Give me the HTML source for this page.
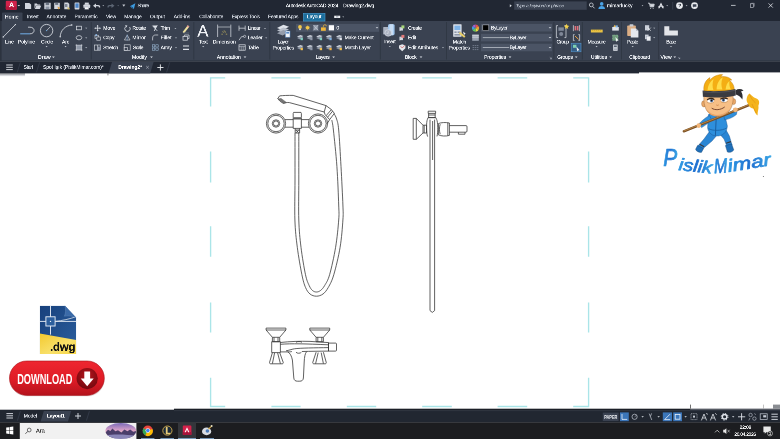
<!DOCTYPE html>
<html><head><meta charset="utf-8"><title>Autodesk AutoCAD 2024 - Drawing2.dwg</title>
<style>
html,body{margin:0;padding:0}
body{width:780px;height:439px;overflow:hidden;background:#fff;position:relative;font-family:"Liberation Sans",sans-serif}
.a{position:absolute}
.t{position:absolute;white-space:nowrap;line-height:1;color:#e6e9ee;-webkit-text-stroke:.55px currentColor;text-shadow:0 0 1.2px currentColor;transform-origin:0 50%}
#tx{position:absolute;left:0;top:0;width:3120px;height:1756px;transform:scale(.25);transform-origin:0 0;will-change:transform}
svg{position:absolute;left:0;top:0;overflow:visible;will-change:transform}
</style></head><body>
<svg width="780" height="439" viewBox="0 0 780 439">
<rect x="0" y="0" width="780" height="21" fill="#212733" />
<rect x="0" y="21" width="780" height="40" fill="#3a4251" />
<rect x="0" y="60.4" width="780" height="1.4" fill="#2e3542" />
<rect x="0" y="61.5" width="639" height="11.9" fill="#212733" />
<rect x="639" y="61.5" width="141" height="10.9" fill="#212733" />
<rect x="2" y="12.5" width="20.5" height="9" fill="#3a4251" rx=".8"/>
<rect x="514.2" y="1.4" width="72.5" height="8.4" fill="#3b4352" />
<rect x="303.3" y="13.3" width="21.7" height="7.8" fill="#1d6e9c" stroke="#4a9bd0" stroke-width=".6"/>
<rect x="0" y="409.7" width="780" height="13" fill="#212731" />
<rect x="174" y="408.7" width="516.6" height="1.6" fill="#1b1f27" />
<rect x="174" y="410.2" width="606" height="0.9" fill="#323844" />
<rect x="690.6" y="408.7" width="90" height="1" fill="#2b313c" />
<rect x="0" y="422.4" width="780" height="16.6" fill="#1c1d20" />
<rect x="19.8" y="423" width="116.6" height="16" fill="#f1f1f1" />
<rect x="178" y="422.4" width="18" height="16.6" fill="#34363b" />
<rect x="5.8" y="0.8" width="11" height="9" rx="1" fill="#d3224b"/>
<rect x="5.8" y="6.5" width="11" height="3.3" rx="1" fill="#b5173c"/>
<path d="M17.50 4.95h2.60l-1.30 1.30z" fill="#e8e8ee"/>
<path d="M25 3h4.3l1.8 1.6v4.4h-6.1z" fill="#d2d6de"/>
<path d="M34.5 3.6h2.4l.7.8h2.6v1h-4.4l-1.3 3.4z M36.2 5.8h5l-1.4 3.2h-5z" fill="#d2d6de"/>
<path d="M44.3 2.8h6.4v6.4h-6.4z" fill="#d2d6de"/><rect x="45.6" y="2.8" width="3.6" height="2.4" fill="#6a7382"/><rect x="45.6" y="6.5" width="3.8" height="2.7" fill="#8a93a2"/>
<path d="M54.2 2.8h5.6v6.2h-5.6z" fill="#d2d6de"/><rect x="55.2" y="2.8" width="3" height="2.1" fill="#6a7382"/><path d="M57.5 6.5l2.8 1.5-2 1.5z" fill="#e0a040"/>
<path d="M64.3 2.6h3.6l1.4 1.3v5.3h-5z" fill="#d2d6de"/><rect x="65" y="4" width="2.4" height="3" fill="#7d8796"/><path d="M67.6 6.6l2.6 2.6h-2.6z" fill="#d8c060"/>
<rect x="74.6" y="2.4" width="4.8" height="7" rx=".6" fill="#d2d6de"/><rect x="75.4" y="3.4" width="3.2" height="4.4" fill="#4a84c8"/>
<rect x="83.4" y="4.4" width="6.8" height="3.6" rx=".8" fill="#d2d6de"/><rect x="84.8" y="2.6" width="4" height="2.2" fill="#d2d6de"/><rect x="84.8" y="7" width="4" height="2.4" fill="#f4f5f8" stroke="#6a7382" stroke-width=".3"/>
<path d="M93 5.8l3-2.4v1.6h2.2c1.4 0 2 .8 2 2v.6h-1.3v-.5c0-.6-.3-.9-.9-.9h-2v1.9z" fill="#d2d6de"/>
<path d="M102.40 5.35h1.80l-0.90 0.90z" fill="#c8ccd4"/>
<path d="M114.5 5.8l-3-2.2v1.5h-2.2c-1.3 0-1.8.7-1.8 1.8v.5h1.2v-.4c0-.5.3-.8.8-.8h2v1.8z" fill="#5d6674"/>
<path d="M117.30 5.35h1.80l-0.90 0.90z" fill="#6a7382"/>
<path d="M122.3 4.6h3l-1.5 2.2z" fill="#c8ccd4"/>
<path d="M129.8 6.2l5.6-3-1.6 6-1.4-2.2z" fill="#3c9be0"/><path d="M130 6.3l2.4.9.3 1.9z" fill="#2a78b8"/>
<path d="M509.8 4.2l2 1.5-2 1.5z" fill="#d8dce2"/>
<circle cx="591.3" cy="4.9" r="1.9" fill="none" stroke="#cfd4dc" stroke-width=".8"/><path d="M592.7 6.4l1.8 1.9" stroke="#cfd4dc" stroke-width=".9"/>
<circle cx="601.7" cy="3.9" r="1.8" fill="#4aa3e6"/><path d="M598.4 9c0-2.2 1.4-3.1 3.3-3.1s3.3.9 3.3 3.1z" fill="#4aa3e6"/>
<path d="M641.60 5.25h1.80l-0.90 0.90z" fill="#c8ccd4"/>
<path d="M648.4 3.2h1.2l.6 3.6h3.4l.6-2.6h-4.2M650.6 8.3v.1M653.2 8.3v.1" fill="none" stroke="#d5d9e0" stroke-width=".9" stroke-linecap="round"/><path d="M650 4.2h4.2l-.6 2.6h-3.2z" fill="#d5d9e0"/>
<path d="M661 2.6l2.9 5.6h-1.5l-1.4-3-1.4 3h-1.5z" fill="#e3e6ec"/><path d="M658.2 6.6h5.6" stroke="#e3e6ec" stroke-width=".7"/>
<path d="M666.30 5.25h1.80l-0.90 0.90z" fill="#c8ccd4"/>
<path d="M672.7 2v7.6" stroke="#4a5262" stroke-width=".5"/>
<circle cx="679.5" cy="5.6" r="3.4" fill="#e8eaee"/>
<path d="M685.70 5.25h1.80l-0.90 0.90z" fill="#c8ccd4"/>
<circle cx="694.5" cy="5.6" r="3.4" fill="#e8eaee"/><path d="M692.8 4.3h3.6v2.4h-2l-1 .9v-.9h-.6z" fill="#3a4251"/>
<path d="M731 5.4h4.6" stroke="#d8dce2" stroke-width=".8"/>
<rect x="750.3" y="3.8" width="3.2" height="3.6" fill="none" stroke="#c8ccd4" stroke-width=".6"/><path d="M751.3 3.3h3v3.3" fill="none" stroke="#c8ccd4" stroke-width=".45"/>
<path d="M768.6 3.4l4.2 4.2M772.8 3.4l-4.2 4.2" stroke="#e3e6ec" stroke-width=".8"/>
<rect x="334.2" y="15.7" width="6" height="2.3" fill="#f0f2f5"/><rect x="336" y="16.4" width="2.4" height=".9" fill="#8a93a2"/>
<path d="M342.40 16.60h1.60l-0.80 0.80z" fill="#d8dce2"/>
<path d="M6.2 65h6.6M6.2 67.3h6.6M6.2 69.6h6.6" stroke="#e3e6ec" stroke-width=".9"/>
<path d="M17.2 72.4l3.2-10M36.4 72.4l3.2-10M166.6 72.4l3.2-10" stroke="#3a4150" stroke-width=".7"/>
<path d="M108.6 73.3l3.4-11.4h41.6l-3.4 11.4z" fill="#3a4251"/>
<path d="M146.2 66l2.6 2.6M148.8 66l-2.6 2.6" stroke="#b8bec8" stroke-width=".6"/>
<path d="M160.4 64.4v6.2M157.3 67.5h6.2" stroke="#eef0f4" stroke-width=".9"/>
<path d="M91.3 22v37.5" stroke="#2c333f" stroke-width=".7"/>
<path d="M193.8 22v37.5" stroke="#2c333f" stroke-width=".7"/>
<path d="M269.8 22v37.5" stroke="#2c333f" stroke-width=".7"/>
<path d="M380.4 22v37.5" stroke="#2c333f" stroke-width=".7"/>
<path d="M446.5 22v37.5" stroke="#2c333f" stroke-width=".7"/>
<path d="M553.9 22v37.5" stroke="#2c333f" stroke-width=".7"/>
<path d="M582.4 22v37.5" stroke="#2c333f" stroke-width=".7"/>
<path d="M621.5 22v37.5" stroke="#2c333f" stroke-width=".7"/>
<path d="M658.6 22v37.5" stroke="#2c333f" stroke-width=".7"/>
<rect x="0" y="21" width="1.6" height="40" fill="#2c333f"/>
<path d="M3.2 37l12.2-12.4" stroke="#dfe3ea" stroke-width=".8" fill="none"/><circle cx="3.2" cy="37" r=".7" fill="#dfe3ea"/><circle cx="15.4" cy="24.6" r=".7" fill="#dfe3ea"/>
<path d="M20.2 33.8h9.8" stroke="#6ea6dc" stroke-width="1.1" fill="none"/><path d="M30 33.8c5.4 0 5.4-6.6 0-6.6h-2" stroke="#dfe3ea" stroke-width=".8" fill="none"/>
<circle cx="46.6" cy="30.6" r="6.2" stroke="#dfe3ea" stroke-width=".8" fill="none"/><path d="M46.6 30.6l3.6-3.8" stroke="#dfe3ea" stroke-width=".7"/><circle cx="46.6" cy="30.6" r=".7" fill="#6ea6dc"/>
<path d="M45.55 46.08h2.10l-1.05 1.05z" fill="#c4cad4"/>
<path d="M60.2 36.6c.4-6.4 5-11 11.6-11.6" stroke="#dfe3ea" stroke-width=".8" fill="none"/><circle cx="60.2" cy="36.8" r=".7" fill="#dfe3ea"/><circle cx="71.8" cy="25" r=".7" fill="#dfe3ea"/>
<path d="M64.55 46.08h2.10l-1.05 1.05z" fill="#c4cad4"/>
<rect x="76.4" y="26.2" width="5.2" height="3.6" stroke="#dfe3ea" stroke-width=".7" fill="none"/>
<path d="M85.15 27.68h2.10l-1.05 1.05z" fill="#c4cad4"/>
<ellipse cx="79" cy="37.7" rx="2.8" ry="2.1" stroke="#dfe3ea" stroke-width=".7" fill="none"/>
<path d="M85.15 37.38h2.10l-1.05 1.05z" fill="#c4cad4"/>
<rect x="76.4" y="45.2" width="5.2" height="4.8" fill="#8f98a8"/><path d="M75.6 45.2h6.8M75.6 50h6.8M76.4 44.4v6.4M81.6 44.4v6.4" stroke="#dfe3ea" stroke-width=".6"/>
<path d="M85.15 47.27h2.10l-1.05 1.05z" fill="#c4cad4"/>
<path d="M52.05 56.62h2.70l-1.35 1.35z" fill="#dfe3ea"/>
<path d="M97.6 25.4v5.6M94.8 28.2h5.6" stroke="#dfe3ea" stroke-width=".8"/><path d="M96.6 26.2l1-1.2 1 1.2zM96.6 30.2l1 1.2 1-1.2zM95.6 27.2l-1.2 1 1.2 1zM99.6 27.2l1.2 1-1.2 1z" fill="#dfe3ea"/>
<rect x="95" y="35.2" width="3.4" height="3.4" stroke="#dfe3ea" stroke-width=".6" fill="none"/><rect x="96.8" y="37" width="3.6" height="3.2" stroke="#dfe3ea" stroke-width=".6" fill="#3a4251"/><circle cx="96.2" cy="35" r=".9" fill="#8ab6e4"/>
<rect x="94.4" y="45" width="6.2" height="5.2" stroke="#dfe3ea" stroke-width=".6" fill="none"/><path d="M97.5 45v5.2" stroke="#dfe3ea" stroke-width=".6"/><rect x="97.8" y="46.6" width="2" height="3.6" fill="#8f98a8"/>
<path d="M129.6 27a2.7 2.7 0 1 1-3.8-.4" stroke="#dfe3ea" stroke-width=".8" fill="none"/><path d="M125 25.2l2.4.2-1 2z" fill="#dfe3ea"/>
<path d="M124.4 40l2.8-4.8 2.8 4.8z" stroke="#dfe3ea" stroke-width=".6" fill="none"/><path d="M127.2 34.4v6.2" stroke="#8ab6e4" stroke-width=".5"/>
<rect x="124.2" y="44.8" width="6" height="5.6" stroke="#dfe3ea" stroke-width=".6" fill="none"/><rect x="124.2" y="47.4" width="3.2" height="3" stroke="#dfe3ea" stroke-width=".6" fill="#3a4251"/>
<path d="M152.6 25.8l4.6 5M157 25.6l-2.8 5.4" stroke="#dfe3ea" stroke-width=".9"/><path d="M152.4 25.6h5.4l-2.6 2.6z" fill="#dfe3ea"/>
<path d="M174.35 27.88h2.10l-1.05 1.05z" fill="#c4cad4"/>
<path d="M152.6 40.4v-2.4c0-2 1.2-3 3-3h2.6" stroke="#dfe3ea" stroke-width=".7" fill="none"/>
<path d="M174.95 37.38h2.10l-1.05 1.05z" fill="#c4cad4"/>
<rect x="152.4" y="44.8" width="2.4" height="2.2" stroke="#a9c8e6" stroke-width=".5" fill="none"/>
<rect x="152.4" y="48.0" width="2.4" height="2.2" stroke="#a9c8e6" stroke-width=".5" fill="none"/>
<rect x="155.8" y="44.8" width="2.4" height="2.2" stroke="#a9c8e6" stroke-width=".5" fill="none"/>
<rect x="155.8" y="48.0" width="2.4" height="2.2" stroke="#a9c8e6" stroke-width=".5" fill="none"/>
<path d="M174.95 47.27h2.10l-1.05 1.05z" fill="#c4cad4"/>
<path d="M183.2 31.2l4.6-6 1.6 1.2-4.6 6-2 .6z" fill="#efe2a0"/><path d="M187.2 25.8l1.6 1.2" stroke="#e08a90" stroke-width="1.2"/><path d="M183 33h6" stroke="#7f8898" stroke-width=".5"/>
<rect x="183" y="36.4" width="4.4" height="3.8" stroke="#dfe3ea" stroke-width=".7" fill="none"/><path d="M184.4 36.4v-1.4h4.6v3.6h-1.4" stroke="#dfe3ea" stroke-width=".7" fill="none"/>
<path d="M183 46h6M183 49.4h6" stroke="#dfe3ea" stroke-width="1.1"/>
<path d="M150.15 56.62h2.70l-1.35 1.35z" fill="#dfe3ea"/>
<path d="M202.15 46.08h2.10l-1.05 1.05z" fill="#c4cad4"/>
<path d="M217.6 24.6v12.4M230.8 24.6v12.4" stroke="#dfe3ea" stroke-width=".7"/><path d="M218 27h12.4" stroke="#dfe3ea" stroke-width=".6"/><path d="M222.4 31.6l1.2 1M226 31.6l-1.2 1M224.2 30.4v1.4M221.4 34.2h1.4M225.8 34.2h1.4" stroke="#e6d060" stroke-width=".6"/>
<path d="M239 25.6v5.2M245.2 25.6v5.2M239 28.2h6.2" stroke="#dfe3ea" stroke-width=".7"/>
<path d="M263.95 27.88h2.10l-1.05 1.05z" fill="#c4cad4"/>
<path d="M239 40.2l2.6-3.6h2" stroke="#dfe3ea" stroke-width=".7" fill="none"/><circle cx="244.6" cy="36.4" r="1.1" stroke="#dfe3ea" stroke-width=".6" fill="none"/>
<path d="M265.15 37.38h2.10l-1.05 1.05z" fill="#c4cad4"/>
<rect x="239" y="44.8" width="6.2" height="5.4" stroke="#dfe3ea" stroke-width=".7" fill="none"/><path d="M239 46.6h6.2M241.2 46.6v3.6M243.2 46.6v3.6" stroke="#dfe3ea" stroke-width=".5"/>
<path d="M243.65 56.62h2.70l-1.35 1.35z" fill="#dfe3ea"/>
<path d="M277 28l6.4-3.2 5.6 2-6.4 3.4z" fill="#dfe3ea"/><path d="M277 30.6l6.4-3.2 5.6 2-6.4 3.4z" fill="#b9bfca"/><path d="M277 33.2l6.4-3.2 5.6 2-6.4 3.4z" fill="#959dab"/><rect x="285.4" y="31" width="4.6" height="6.2" fill="#f2f4f7" stroke="#5a8ac4" stroke-width=".5"/><rect x="286.2" y="32" width="3" height="1.6" fill="#5a8ac4"/>
<rect x="295.9" y="23.9" width="83.2" height="7.9" fill="#4b5465"/>
<circle cx="300" cy="27" r="1.9" fill="#f2c84a"/><rect x="299.1" y="28.6" width="1.8" height="1.5" fill="#d8dce4"/>
<circle cx="307.6" cy="27.8" r="1.8" fill="#f2c84a"/><path d="M307.6 25.2v5.2M305 27.8h5.2M305.8 26l3.6 3.6M309.4 26l-3.6 3.6" stroke="#f2c84a" stroke-width=".4"/>
<rect x="313.4" y="25" width="4.8" height="5.4" fill="#8d96a6"/><path d="M313.4 25l4.8 5.4M318.2 25l-4.8 5.4" stroke="#dfe3ea" stroke-width=".5"/>
<rect x="321" y="27.4" width="4.8" height="3.4" fill="#f0b83c"/><path d="M323.4 27.4v-1.2a1.5 1.5 0 0 1 3 0" stroke="#f0b83c" stroke-width=".7" fill="none"/>
<rect x="328.8" y="25.2" width="5.2" height="5.2" fill="#fbfbfc"/>
<path d="M375.70 27.25h2.60l-1.30 1.30z" fill="#dfe3ea"/>
<path d="M297 36.6l3.4-1.7 3 1.1-3.4 1.9z" fill="#c9ced8"/><path d="M297 38.1l3.4-1.7 3 1.1-3.4 1.9z" fill="#8d96a5"/><rect x="300.6" y="37.9" width="2.3" height="2.3" fill="#7fd0c0"/>
<path d="M297 46.6l3.4-1.7 3 1.1-3.4 1.9z" fill="#c9ced8"/><path d="M297 48.1l3.4-1.7 3 1.1-3.4 1.9z" fill="#8d96a5"/><rect x="300.6" y="47.9" width="2.3" height="2.3" fill="#f0c050"/>
<path d="M306.6 36.6l3.4-1.7 3 1.1-3.4 1.9z" fill="#c9ced8"/><path d="M306.6 38.1l3.4-1.7 3 1.1-3.4 1.9z" fill="#8d96a5"/><rect x="310.20000000000005" y="37.9" width="2.3" height="2.3" fill="#8f98a8"/>
<path d="M306.6 46.6l3.4-1.7 3 1.1-3.4 1.9z" fill="#c9ced8"/><path d="M306.6 48.1l3.4-1.7 3 1.1-3.4 1.9z" fill="#8d96a5"/><rect x="310.20000000000005" y="47.9" width="2.3" height="2.3" fill="#8f98a8"/>
<path d="M316.2 36.6l3.4-1.7 3 1.1-3.4 1.9z" fill="#c9ced8"/><path d="M316.2 38.1l3.4-1.7 3 1.1-3.4 1.9z" fill="#8d96a5"/><rect x="319.8" y="37.9" width="2.3" height="2.3" fill="#7fd0c0"/>
<path d="M316.2 46.6l3.4-1.7 3 1.1-3.4 1.9z" fill="#c9ced8"/><path d="M316.2 48.1l3.4-1.7 3 1.1-3.4 1.9z" fill="#8d96a5"/><rect x="319.8" y="47.9" width="2.3" height="2.3" fill="#f0c050"/>
<path d="M325.8 36.6l3.4-1.7 3 1.1-3.4 1.9z" fill="#c9ced8"/><path d="M325.8 38.1l3.4-1.7 3 1.1-3.4 1.9z" fill="#8d96a5"/><rect x="329.40000000000003" y="37.9" width="2.3" height="2.3" fill="#7fb0e0"/>
<path d="M325.8 46.6l3.4-1.7 3 1.1-3.4 1.9z" fill="#c9ced8"/><path d="M325.8 48.1l3.4-1.7 3 1.1-3.4 1.9z" fill="#8d96a5"/><rect x="329.40000000000003" y="47.9" width="2.3" height="2.3" fill="#f0b040"/>
<path d="M336 36.6l3.4-1.7 3 1.1-3.4 1.9z" fill="#c9ced8"/><path d="M336 38.1l3.4-1.7 3 1.1-3.4 1.9z" fill="#8d96a5"/><rect x="339.6" y="37.9" width="2.3" height="2.3" fill="#dfe3ea"/>
<path d="M336 46.6l3.4-1.7 3 1.1-3.4 1.9z" fill="#c9ced8"/><path d="M336 48.1l3.4-1.7 3 1.1-3.4 1.9z" fill="#8d96a5"/><rect x="339.6" y="47.9" width="2.3" height="2.3" fill="#f0c050"/>
<path d="M332.25 56.62h2.70l-1.35 1.35z" fill="#dfe3ea"/>
<rect x="383.2" y="27" width="8.6" height="7.4" rx=".6" fill="#aab2c0"/><rect x="388" y="24.2" width="6.6" height="11" rx="1.4" fill="#9cc4ec"/><rect x="389.4" y="24.2" width="3.8" height="11" fill="#c6dcf4"/><circle cx="388.2" cy="33" r="3.3" fill="#aab2c0" stroke="#e8ebf0" stroke-width=".5"/><path d="M388.2 31v2.4h-1.6" stroke="#eef0f4" stroke-width=".5" fill="none"/>
<path d="M388.75 45.88h2.10l-1.05 1.05z" fill="#c4cad4"/>
<rect x="399.4" y="27.2" width="3.6" height="3.4" fill="#c9ced8"/><rect x="401.4" y="25.4" width="3" height="3" fill="#a6d47a"/><path d="M399.79999999999995 31.0l2.2-2.8" stroke="#eef0f4" stroke-width=".5"/>
<rect x="399.4" y="36.7" width="3.6" height="3.4" fill="#c9ced8"/><rect x="401.4" y="34.900000000000006" width="3" height="3" fill="#e07a7a"/><path d="M399.79999999999995 40.5l2.2-2.8" stroke="#eef0f4" stroke-width=".5"/>
<path d="M399 45.4l3.2-1.2 3.2 1.2v2.8l-3.2 3-3.2-3z" fill="#e4e7ec"/><path d="M400.6 46.2l1.6 1.8 2.6-2.8" stroke="#d05a5a" stroke-width=".7" fill="none"/>
<path d="M441.95 47.27h2.10l-1.05 1.05z" fill="#c4cad4"/>
<path d="M419.65 56.62h2.70l-1.35 1.35z" fill="#dfe3ea"/>
<rect x="453.2" y="24.2" width="8.4" height="12.6" rx=".6" fill="#dfe3ea"/><rect x="454.4" y="25.6" width="6" height="4.4" fill="#7fb4e8"/><rect x="454.4" y="31.4" width="2.2" height="1.6" fill="#8f98a8"/><rect x="457.6" y="31.4" width="2.8" height="1.6" fill="#8f98a8"/><rect x="454.4" y="34" width="6" height="1.6" fill="#8f98a8"/><path d="M459.4 32.6l5.4 4.4" stroke="#e8cf6a" stroke-width="2"/><path d="M463 31.6l2.6 2-1.6 1.4z" fill="#f0f2f5"/>
<path d="M475.5 28.1L475.50 24.50A3.6 3.6 0 0 1 478.62 26.30z" fill="#e8504a"/>
<path d="M475.5 28.1L478.62 26.30A3.6 3.6 0 0 1 478.62 29.90z" fill="#f0a030"/>
<path d="M475.5 28.1L478.62 29.90A3.6 3.6 0 0 1 475.50 31.70z" fill="#e8e040"/>
<path d="M475.5 28.1L475.50 31.70A3.6 3.6 0 0 1 472.38 29.90z" fill="#60c860"/>
<path d="M475.5 28.1L472.38 29.90A3.6 3.6 0 0 1 472.38 26.30z" fill="#40a0e0"/>
<path d="M475.5 28.1L472.38 26.30A3.6 3.6 0 0 1 475.50 24.50z" fill="#a060d0"/>
<rect x="472.2" y="34.4" width="6.6" height="6.4" fill="#9aa2b0"/><path d="M472.2 35.6h6.6M472.2 37.2h6.6" stroke="#dfe3ea" stroke-width=".7"/>
<path d="M472.6 45.6h5.8M472.6 47.6h5.8M472.6 49.6h5.8" stroke="#7f8898" stroke-width=".8" stroke-dasharray="1.6 .6"/>
<rect x="481" y="23.9" width="71.1" height="7.6" fill="#4b5465"/>
<path d="M548.70 27.15h2.60l-1.30 1.30z" fill="#dfe3ea"/>
<rect x="481" y="33.8" width="71.1" height="7.6" fill="#4b5465"/>
<path d="M548.70 37.05h2.60l-1.30 1.30z" fill="#dfe3ea"/>
<rect x="481" y="43.7" width="71.1" height="7.6" fill="#4b5465"/>
<path d="M548.70 46.95h2.60l-1.30 1.30z" fill="#dfe3ea"/>
<rect x="482.8" y="24.9" width="6" height="5.8" fill="#000" stroke="#c8ccd4" stroke-width=".5"/>
<path d="M482.8 37.6h26.4M482.8 47.5h26.4" stroke="#dfe3ea" stroke-width=".6"/>
<path d="M508.65 56.62h2.70l-1.35 1.35z" fill="#dfe3ea"/>
<path d="M549.8 57.4l1.6 1.4M551.4 57.6v1.2h-1.2" stroke="#c4cad4" stroke-width=".5" fill="none"/>
<path d="M558 25.6h-1.6v12h1.6M564.4 25.6h1.6v12h-1.6" stroke="#dfe3ea" stroke-width=".7" fill="none"/><rect x="558.4" y="27.4" width="5.4" height="3.4" fill="#7f8898"/><circle cx="561.2" cy="34" r="2" fill="#7f8898"/><path d="M566.6 23.8l.8 1.8 1.8.4-1.4 1.2.4 1.9-1.6-1-1.6 1 .4-1.9-1.4-1.2 1.8-.4z" fill="#f2d048"/>
<path d="M573.4 25.2v6M579.4 25.2v6" stroke="#dfe3ea" stroke-width=".7"/><rect x="574.6" y="26" width="1.6" height="4.4" fill="#e0707a"/><rect x="576.8" y="26" width="1.6" height="4.4" fill="#e0707a"/>
<path d="M574.6 34.6h-1.2v6h1.2M578.4 34.6h1.2v6h-1.2" stroke="#dfe3ea" stroke-width=".7" fill="none"/><path d="M575 36l3.6 3.4" stroke="#e8a040" stroke-width="1"/>
<rect x="571.2" y="43.2" width="9.8" height="8.6" fill="#345d86" stroke="#5c9fd8" stroke-width=".5"/><rect x="573" y="44.8" width="3.4" height="3" fill="#7fd0b0"/><path d="M576.4 46.4l3.2 3.8-1.6.2-.8 1.2z" fill="#eef0f4"/>
<path d="M574.85 56.62h2.70l-1.35 1.35z" fill="#dfe3ea"/>
<rect x="590.9" y="29.6" width="11.8" height="2.9" fill="#e9c244"/><path d="M592.4 29.6v1.2M594.4 29.6v1.2M596.4 29.6v1.2M598.4 29.6v1.2M600.4 29.6v1.2" stroke="#8a6a10" stroke-width=".3"/>
<path d="M595.55 46.08h2.10l-1.05 1.05z" fill="#c4cad4"/>
<rect x="612.2" y="27" width="6.6" height="3.6" fill="#dfe3ea"/><path d="M613.4 27l1.4-2.2 1.6 2.2z" fill="#f0c050"/><rect x="615.6" y="25.4" width="2.2" height="2" fill="#7fb4e8"/>
<rect x="612.6" y="35" width="5.4" height="5.4" fill="#6f9a7c" stroke="#9fd0a8" stroke-width=".5" stroke-dasharray="1 .6"/><path d="M615.4 37l3.2 3.6-1.6.2-.7 1.2z" fill="#f2f4f7"/>
<rect x="613.2" y="44.6" width="4.4" height="6.2" fill="#dfe3ea"/><rect x="614" y="45.4" width="2.8" height="1.6" fill="#566070"/><path d="M614 48h2.8M614 49.4h2.8" stroke="#566070" stroke-width=".6" stroke-dasharray=".7 .35"/>
<path d="M609.25 56.62h2.70l-1.35 1.35z" fill="#dfe3ea"/>
<rect x="627.2" y="25.4" width="8.6" height="10.6" rx=".8" fill="#dcae84"/><rect x="629.6" y="24.2" width="3.8" height="2.2" rx=".5" fill="#c8ccd4"/><path d="M630.8 28.4h5.2l2.4 2.4v6.8h-7.6z" fill="#e6e9ee"/><path d="M636 28.4v2.4h2.4z" fill="#aeb5c2"/>
<path d="M631.65 46.08h2.10l-1.05 1.05z" fill="#c4cad4"/>
<rect x="645" y="25.2" width="4.2" height="5.2" fill="#c9ced8"/><path d="M647.6 27.6l3.2 3.2M650.8 27.6l-3.2 3.2" stroke="#eef0f4" stroke-width=".7"/>
<path d="M653.15 27.68h2.10l-1.05 1.05z" fill="#c4cad4"/>
<rect x="645" y="34.6" width="3.6" height="4.6" fill="#c9ced8"/><rect x="646.8" y="36.2" width="3.8" height="4.6" fill="#eef0f4" stroke="#8f98a8" stroke-width=".3"/>
<path d="M653.15 37.27h2.10l-1.05 1.05z" fill="#c4cad4"/>
<path d="M664.3 26.2h5v4.4h8.6v5h-13.6z" fill="#e3e5e9"/>
<path d="M669.95 46.08h2.10l-1.05 1.05z" fill="#c4cad4"/>
<path d="M673.45 56.62h2.70l-1.35 1.35z" fill="#dfe3ea"/>
<path d="M678.4 57.4l1.4 1.2M679.8 57.6v1h-1" stroke="#c4cad4" stroke-width=".5" fill="none"/>
<rect x="0" y="73.2" width="25" height="1.2" fill="#6e7278"/><rect x="0" y="74.4" width="25" height="1" fill="#a4a7ac"/><rect x="0" y="75.4" width="25" height=".7" fill="#d6d8dc"/>
<rect x="107.6" y="73" width=".7" height="2.4" fill="#555"/>
<path d="M210.60 77.8H224.52M210.60 406.5H224.52M272.07 77.8H299.93M272.07 406.5H299.93M347.48 77.8H375.52M347.48 406.5H375.52M422.88 77.8H451.12M422.88 406.5H451.12M498.28 77.8H526.53M498.28 406.5H526.53M573.88 77.8H588.60M573.88 406.5H588.60M210.6 77.80V105.92M588.6 77.80V105.92M210.6 152.28V181.72M588.6 152.28V181.72M210.6 226.88V256.12M588.6 226.88V256.12M210.6 303.07V331.72M588.6 303.07V331.72M210.6 378.48V406.50M588.6 378.48V406.50" stroke="#aae5e8" stroke-width="1.35" fill="none" stroke-linecap="square"/>
<g fill="none" stroke="#333" stroke-width=".78" stroke-linejoin="round"><circle cx="276" cy="123.5" r="9.6"/><circle cx="276" cy="123.5" r="8.2"/><circle cx="276" cy="123.5" r="3.7"/><circle cx="276" cy="123.5" r="2.6"/><circle cx="318" cy="123.5" r="9.6"/><circle cx="318" cy="123.5" r="8.2"/><circle cx="318" cy="123.5" r="3.7"/><circle cx="318" cy="123.5" r="2.6"/><path d="M285 119.6h8.2M285 127.2h8.2M301.4 119.6h7.6M301.4 127.2h7.6"/><path d="M293.6 112.4h7.4l.4 1v4l-.6 .6h-7l-.6-.6v-4zM293.4 118h7.8M293.4 119h7.8M293.2 118v10.4h8.2v-10.4M295.2 128.4v4.6h4.4v-4.6M295.2 130h4.4M296.2 130.2l2.4 2.6M298.6 130.2l-2.4 2.6"/><path d="M295 133C295.00 140.83 295.02 165.50 295 180C294.98 194.50 294.52 208.78 294.9 220C295.28 231.22 296.13 238.18 297.3 247.3C298.47 256.42 300.53 268.02 301.9 274.7C303.27 281.38 304.15 284.18 305.5 287.4C306.85 290.62 308.18 292.53 310 294C311.82 295.47 314.23 296.20 316.4 296.2C318.57 296.20 321.02 295.47 323 294C324.98 292.53 326.50 290.62 328.3 287.4C330.10 284.18 331.83 281.38 333.8 274.7C335.77 268.02 338.58 256.42 340.1 247.3C341.62 238.18 342.43 227.05 342.9 220C343.37 212.95 343.22 213.93 342.9 205C342.58 196.07 341.70 178.90 341 166.4C340.30 153.90 339.43 137.90 338.7 130C337.97 122.10 337.38 121.75 336.6 119C335.82 116.25 334.43 114.42 334 113.5"/><path d="M298.8 133C298.80 140.83 298.80 165.50 298.8 180C298.80 194.50 298.43 208.78 298.8 220C299.17 231.22 299.88 238.18 301 247.3C302.12 256.42 304.13 268.32 305.5 274.7C306.87 281.08 308.03 282.97 309.2 285.6C310.37 288.23 311.30 289.43 312.5 290.5C313.70 291.57 315.07 292.00 316.4 292C317.73 292.00 319.13 291.57 320.5 290.5C321.87 289.43 323.08 288.23 324.6 285.6C326.12 282.97 327.77 281.08 329.6 274.7C331.43 268.32 334.08 256.42 335.6 247.3C337.12 238.18 338.18 227.05 338.7 220C339.22 212.95 339.00 213.93 338.7 205C338.40 196.07 337.78 178.90 336.9 166.4C336.02 153.90 334.25 137.73 333.4 130C332.55 122.27 332.07 121.67 331.8 120"/><path d="M277.8 98.6L279.6 95.9C283 95.5 288 95.3 293.2 95.4L326 105.6L324.2 112L289.4 102.6C287 102.2 285.4 102.8 283.6 103.4C281 102.4 279 100.6 277.8 98.4Z"/><path d="M278.4 99L283.6 103.2L286.4 102.4L281 98.4Z" fill="#777" stroke-width=".4"/><path d="M326 105.6L331.4 109.6L334.4 113.4L329.6 119.6L325 114.4L324.2 112M327.6 117.2L332.6 111.2M326.2 115.6L331.4 109.6"/><path d="M329.6 119.6C328.6 121.6 327.6 123 326.6 124"/><path d="M413.2 118.4h3.1v20.9h-3.1zM416.3 118.4L423 125.2V133L416.3 139.3M423 125.2h3.6v7.8H423M424.2 125.2v7.8"/><path d="M428.2 111.2h7.4v2.2h-7.4zM428.6 113.4v4.2h6.6v-4.2M428.6 115h6.6M428 117.6h7.8M427.4 119.4C426.2 122 426.2 133 427.6 136.6M436.6 119.4C438 122 438.2 132 437 136.4M428 117.6L427.4 119.4M435.8 117.6L436.6 119.4"/><path d="M430 119.6V310.6L432.3 312.4L434.6 310.6V119.6M432.6 121V160" /><path d="M438.4 123.6C441 122.4 446 122.2 449.4 123V135.4C446 136.4 441 136.2 438.4 134.8ZM440.2 124.2C439.2 127 439.2 131.4 440.2 134.2M447.8 122.8v12.8M449.4 125.6H466C466.8 125.6 467 126 467 126.8V131C467 131.8 466.6 132.2 466 132.2H449.4M458.4 132.2V134.2H465V132.2"/><path d="M266.1 328.1H285.9V330L279.7 337.3H272.4L266.1 330ZM266.1 330H285.9M272.4 337.3V341.7H279.7V337.3M274 337.3V341.7M278 337.3V341.7"/><path d="M309.8 328.1H329.7V330L323.4 337.3H316.1L309.8 330ZM309.8 330H329.7M316.1 337.3V341.7H323.4V337.3M317.8 337.3V341.7M321.8 337.3V341.7"/><path d="M271.7 341.7H280.4V352.6H271.7Z"/><path d="M272.4 352.6L269.5 362.6C269.4 363.4 270 363.8 270.8 363.8H282C283 363.8 283.4 363.2 283.3 362.6L279.7 352.6M274.6 352.8L272.4 363.6M277.6 352.8L280.4 363.6"/><path d="M316.1 352.2L312.7 362.6C312.6 363.4 313.2 363.8 314 363.8H325C326 363.8 326.4 363.2 326.3 362.6L323.4 352.2M318.2 352.6L315.6 363.6M321.2 352.6L323.4 363.6"/><path d="M280.4 342.5C290 341.4 300 341.1 310 341.4L328.5 342.6M280.4 351.9H288C290 351.9 291 351.7 292 351.5M302 351.5C310 351.3 320 351.2 328.5 351.1M280.4 344.3C292 343.4 305 343.8 328.5 344.8M296 342.3C297 341.3 301 341.3 302 342.3M286 350.8C289 350.4 291 349.4 294.4 348.8C300 348 315 347.8 328.5 347.6"/><path d="M328.5 343.1H335.6C336.2 343.1 336.5 343.5 336.5 344V350.2C336.5 350.8 336.2 351.1 335.6 351.1H328.5ZM328.5 342.4V351.2"/><path d="M287.7 351.8C290 353 291.6 356 292.4 360L293.8 378C294 380.2 295.4 381.2 297.4 381.2H299.8C301.8 381.2 303.2 380.2 303.4 378L304.2 362C304.4 357 305 353.6 306.6 351.6M296 352.2C297 353.6 300.4 353.6 301.4 352.2"/></g>
<rect x="690.2" y="404.6" width=".7" height="4" fill="#333"/><rect x="763.2" y="404.6" width=".6" height="4" fill="#999"/><rect x="773" y="404.6" width="7" height="4.2" fill="#8a8d92"/>
<path d="M6.4 413.6h6.6M6.4 415.8h6.6M6.4 418h6.6" stroke="#dfe3ea" stroke-width=".9"/>
<path d="M17.4 420.6l3-9.4M42 420.6l3-9.4M86.4 420.6l3-9.4" stroke="#3a4150" stroke-width=".7"/>
<path d="M40.6 421.6l3.2-10.6h27.4l-3.2 10.6z" fill="#3a4251"/>
<path d="M78 413v6M75 416h6" stroke="#dfe3ea" stroke-width=".9"/>
<rect x="602.8" y="412.6" width="15.8" height="8.4" fill="#3a4251"/>
<text x="604.3" y="418.7" font-family="Liberation Sans, sans-serif" font-size="5.3" fill="#f2f4f7" font-weight="bold" textLength="13.00" lengthAdjust="spacingAndGlyphs">PAPER</text>
<rect x="620" y="412.4" width="8.8" height="8.8" fill="#3b76ba"/><path d="M622 414v5.4h5.2" stroke="#eaf2fc" stroke-width=".8" fill="none"/>
<circle cx="634.6" cy="416.8" r="2.6" stroke="#c4cad4" stroke-width=".7" fill="none"/><path d="M634.6 416.8l2-1.6" stroke="#c4cad4" stroke-width=".6"/>
<path d="M641.35 416.27h2.50l-1.25 1.25z" fill="#dfe3ea"/>
<path d="M649.2 413.6l2.6 6.4M651.6 413.4l-1.2 3" stroke="#c4cad4" stroke-width=".7"/>
<path d="M657.35 416.27h2.50l-1.25 1.25z" fill="#dfe3ea"/>
<rect x="662.8" y="412.4" width="9.2" height="8.8" fill="#3b76ba"/><path d="M664.6 419.6l5.4-5.4M664.6 419.6h5.6" stroke="#eaf2fc" stroke-width=".8"/>
<rect x="673.2" y="412.4" width="8.8" height="8.8" fill="#3b76ba"/><rect x="675.2" y="414.4" width="4.8" height="4.8" stroke="#eaf2fc" stroke-width=".8" fill="none"/>
<path d="M684.35 416.27h2.50l-1.25 1.25z" fill="#dfe3ea"/>
<rect x="691" y="413.6" width="6" height="6" stroke="#c4cad4" stroke-width=".6" stroke-dasharray="1.4 .8" fill="none"/><rect x="693" y="415.6" width="2" height="2" fill="#c4cad4"/>
<path d="M701.4 420.4l2.6-6.4 2.6 6.4M702.4 418h3.2" stroke="#dfe3ea" stroke-width=".8" fill="none"/><path d="M706 413.4l2 1" stroke="#dfe3ea" stroke-width=".7"/>
<path d="M710.4 420.4l2.6-6.4 2.6 6.4M711.4 418h3.2" stroke="#dfe3ea" stroke-width=".8" fill="none"/><path d="M715 413.2l1.8 1.6" stroke="#dfe3ea" stroke-width=".7"/>
<circle cx="724.6" cy="416.8" r="2.3" stroke="#dfe3ea" stroke-width="1.5" fill="none"/><circle cx="724.6" cy="416.8" r="3.4" stroke="#dfe3ea" stroke-width="1" stroke-dasharray="1.2 1.47" fill="none"/>
<path d="M731.95 416.27h2.50l-1.25 1.25z" fill="#dfe3ea"/>
<path d="M741.6 413.2v7.2M738 416.8h7.2" stroke="#dfe3ea" stroke-width=".9"/>
<circle cx="750.6" cy="415" r="1.7" stroke="#c4cad4" stroke-width=".6" fill="none"/><circle cx="754.4" cy="418.6" r="1.7" stroke="#c4cad4" stroke-width=".6" fill="none"/><path d="M750 418l-1.2 2.4M754.6 413.4l1 1.4" stroke="#c4cad4" stroke-width=".6"/>
<rect x="760.2" y="413.8" width="7" height="5.6" stroke="#c4cad4" stroke-width=".7" fill="none"/><rect x="763.2" y="415.2" width="3" height="2.2" fill="#c4cad4"/>
<path d="M771.4 414.2h6.4M771.4 416.8h6.4M771.4 419.4h6.4" stroke="#dfe3ea" stroke-width=".9"/>
<path d="M6.2 427.6l3-.45v3.1h-3zM9.7 427.1l3.6-.55v3.7h-3.6zM6.2 430.8h3v3.1l-3-.45zM9.7 430.8h3.6v3.7l-3.6-.55z" fill="#ffffff"/>
<circle cx="29.2" cy="430" r="1.9" stroke="#3a3a3a" stroke-width=".7" fill="none"/><path d="M27.8 431.4l-2.4 2.4" stroke="#3a3a3a" stroke-width=".8"/>
<defs><linearGradient id="sky" x1="0" y1="0" x2="0" y2="1"><stop offset="0" stop-color="#7a6ab8"/><stop offset=".45" stop-color="#d8a0c8"/><stop offset=".7" stop-color="#f0c8b8"/><stop offset="1" stop-color="#b8b0d0"/></linearGradient><clipPath id="thc"><ellipse cx="120.8" cy="431" rx="15.4" ry="8"/></clipPath></defs>
<g clip-path="url(#thc)"><rect x="105" y="423" width="32" height="16" fill="url(#sky)"/><path d="M105 433l3-3.2 2.4 1.2 2-2.4 3 2.6 2.6-1 3.4 2.2 3-2.8 3 1.6 2.8-1.8 3 2.4 3-.8v7h-31z" fill="#4a3e6a"/><path d="M105 435.6c8-1.6 20-1.4 32 .4v4h-32z" fill="#8a86b8"/></g>
<circle cx="147.8" cy="430.6" r="5" fill="#e8453c"/><path d="M147.8 430.6l-4.4-2.4a5 5 0 0 0 2 7.2z" fill="#34a853"/><path d="M147.8 430.6l-2.4 4.8a5 5 0 0 0 7-6.4z" fill="#fbbc05"/><circle cx="147.8" cy="430.6" r="2.3" fill="#fff"/><circle cx="147.8" cy="430.6" r="1.8" fill="#4285f4"/>
<circle cx="167.4" cy="430.6" r="4.6" fill="#1a2a3a" stroke="#c8a44a" stroke-width="1"/><path d="M165.8 427v7.2h4.2l.8-1.4h-3.2v-5.8z" fill="#e8cc7a"/>
<rect x="182.8" y="425.6" width="8.6" height="9.4" rx=".8" fill="#d3224b"/><rect x="182.8" y="432" width="8.6" height="3" fill="#a8143a"/><path d="M187 427.2l2.4 5h-1.2l-1.2-2.8-1.2 2.8h-1.2z" fill="#fff"/>
<ellipse cx="206.6" cy="431.4" rx="4.6" ry="3.8" fill="#d8dce2"/><circle cx="207.4" cy="431" r="1.8" fill="#4a7ab8"/><path d="M208 428.6l3.4-2.8.6.8-3 2.8z" fill="#c8a040"/><circle cx="211.6" cy="426" r="1" fill="#e8e0c0"/>
<rect x="141" y="438.2" width="13.400000000000006" height=".8" fill="#8ab4dc"/>
<rect x="160.4" y="438.2" width="13.599999999999994" height=".8" fill="#8ab4dc"/>
<rect x="178" y="438.2" width="18" height=".8" fill="#8ab4dc"/>
<rect x="200" y="438.2" width="14" height=".8" fill="#8ab4dc"/>
<path d="M715 432.4l2.2-2.2 2.2 2.2" stroke="#e6e6e6" stroke-width=".7" fill="none"/>
<path d="M723.2 429.8h1.4l1.8-1.6v5.8l-1.8-1.6h-1.4z" fill="#e6e6e6"/><path d="M727.6 429.8l2 2.6M729.6 429.8l-2 2.6" stroke="#e6e6e6" stroke-width=".5"/>
<path d="M763.4 426.6h7.4v5.6h-4.6l-1.4 1.6v-1.6h-1.4z" fill="#e8e8e8"/><circle cx="770" cy="433.4" r="2.5" fill="#1a1b1d" stroke="#e8e8e8" stroke-width=".6"/>
<defs>
<linearGradient id="dwb" x1="0" y1="0" x2="1" y2="1"><stop offset="0" stop-color="#17407c"/><stop offset="1" stop-color="#2c5f9e"/></linearGradient>
<linearGradient id="dwy" x1="0" y1="0" x2="1" y2="1"><stop offset="0" stop-color="#f3c92e"/><stop offset=".6" stop-color="#f8e06a"/><stop offset="1" stop-color="#f6d648"/></linearGradient>
<clipPath id="dwc"><path d="M39.8 305.7H64.9L76.2 317.8V354H39.8Z"/></clipPath>
<linearGradient id="dlr" x1="0" y1="0" x2="0" y2="1"><stop offset="0" stop-color="#ee2630"/><stop offset=".55" stop-color="#df1c26"/><stop offset="1" stop-color="#b4121c"/></linearGradient>
<radialGradient id="dlc" cx=".5" cy=".35" r=".7"><stop offset="0" stop-color="#b8141c"/><stop offset="1" stop-color="#6e080e"/></radialGradient>
</defs>
<g clip-path="url(#dwc)"><rect x="39.8" y="305.7" width="36.4" height="48.3" fill="url(#dwb)"/><path d="M39.8 333.4L76.2 340V354H39.8Z" fill="url(#dwy)"/><path d="M50.5 305.7V334.6M39.8 321.4H76.2" stroke="#eef2f8" stroke-width=".9" fill="none"/><path d="M55.3 321.4C62 320.6 70 319 76.2 316.6" stroke="#eef2f8" stroke-width=".7" fill="none"/><rect x="45.9" y="316.8" width="9.2" height="9.2" fill="#2c5f9e" stroke="#eef2f8" stroke-width=".9"/><circle cx="50.5" cy="321.4" r=".7" fill="#eef2f8"/></g>
<path d="M64.9 305.7C66 309.5 65.8 313 64.4 316.2C68 315.4 72.4 315.8 76.2 317.8Z" fill="#3a6aa8"/><path d="M64.9 305.7C66 309.5 65.8 313 64.4 316.2C68 315.4 72.4 315.8 76.2 317.8" fill="none" stroke="#6f94c4" stroke-width=".4"/>
<rect x="10.4" y="363" width="94" height="33.6" rx="16.8" fill="#d8d8d8" opacity=".55"/>
<rect x="9.5" y="361" width="94.8" height="34.4" rx="17.2" fill="url(#dlr)" stroke="#a8121a" stroke-width=".6"/>
<circle cx="87.2" cy="378.6" r="10.6" fill="url(#dlc)"/>
<path d="M84.3 371.4h5.8v7h3.6l-6.5 7.8-6.5-7.8h3.6z" fill="#ffffff"/>
<text x="17.2" y="384.1" font-family="Liberation Sans, sans-serif" font-weight="bold" font-size="14.4" fill="#ffffff" textLength="55.2" lengthAdjust="spacingAndGlyphs">DOWNLOAD</text>
<g><path d="M712 128L704 139L697.4 146.6L701.4 150L712 141L718 134Z" fill="#2a86d4" stroke="#174e8c" stroke-width=".4"/><path d="M717 131L724 139L727 146.6L732 145L729.4 136L724.4 127Z" fill="#2a86d4" stroke="#174e8c" stroke-width=".4"/><path d="M697.6 145.4L703.6 148.6L701.4 152.4C698.4 152.6 696 151 695.6 149.2Z" fill="#1f6fb8" stroke="#123e70" stroke-width=".4"/><path d="M725.4 145.6L731.6 143.8L733.8 150C732 152.4 729.4 152.8 727.4 152Z" fill="#1f6fb8" stroke="#123e70" stroke-width=".4"/><path d="M699.6 144.2l4.6 2.6M726 143.2l5-1.6" stroke="#3a3a40" stroke-width="1.2"/><path d="M708.4 114.6C712 112.4 720 112.2 724.6 114.4L727.4 126C727 131 724 135.4 718.4 136C712 136.2 708.6 133 707.6 128Z" fill="#2e8fdc" stroke="#174e8c" stroke-width=".4"/><path d="M716.4 113.4L715.4 135.6" stroke="#1b5fa0" stroke-width="1"/><path d="M708.6 128.6C712 131 722 131 726.6 128" stroke="#1b5fa0" stroke-width=".8" fill="none"/><path d="M709.4 115.4C705 118 701 121.4 698.4 124.4L701.6 127.6C705 125.6 709 122.6 711.6 119.6Z" fill="#2e8fdc" stroke="#174e8c" stroke-width=".4"/><path d="M723.6 114.6C727 114.2 730.4 113.6 732.4 112.4L734 108.4L737.4 109.4L736.4 114.6C733 117.4 728.6 119.4 724.6 119.8Z" fill="#2e8fdc" stroke="#174e8c" stroke-width=".4"/><path d="M683.8 131.4L750.2 104.6" stroke="#7a4e22" stroke-width="2.3" stroke-linecap="round"/><path d="M684 131L750 104.3" stroke="#b98848" stroke-width=".9" stroke-linecap="round"/><circle cx="698.8" cy="125.6" r="2.3" fill="#f2b578"/><circle cx="735.4" cy="109.8" r="2.4" fill="#f2b578"/><path d="M746.6 99C747 96 748.4 94.2 749.6 93.6C751 95 753 97.4 756.4 98.6C759.4 99.8 759.8 103 758.4 105.6C759 109 757.4 111.4 757.6 115.4C755.4 114 754.4 111 753.4 108.4C751.4 108.4 749.4 106.8 748.4 104.4C747.4 103 746.4 101 746.6 99Z" fill="#f4b41c"/><path d="M749.6 94.4C751 98 753 101 755.6 103M752 104C753 107 754.6 110 756.4 113" stroke="#e08f10" stroke-width=".6" fill="none"/><ellipse cx="703.8" cy="103.8" rx="2.2" ry="3.1" fill="#eaa868" stroke="#8a5a2a" stroke-width=".35"/><ellipse cx="733.6" cy="101.6" rx="2.1" ry="3" fill="#eaa868" stroke="#8a5a2a" stroke-width=".35"/><path d="M704 94C703.2 103 705 110.6 710 114C714.4 116.6 722 116.4 726.8 113.2C731.8 109.6 733.8 103 733 93Z" fill="#f6bf86" stroke="#8a5a2a" stroke-width=".4"/><path d="M706 108C708 112 712 114.6 717 115C722 115 727 112.6 730 108.6C728 114 722 116.6 717 116.4C712 116.4 707.6 113.6 706 108Z" fill="#e8a468"/><ellipse cx="710.6" cy="100.4" rx="3.4" ry="2.4" fill="#fff"/><ellipse cx="724.2" cy="99.8" rx="3.4" ry="2.4" fill="#fff"/><circle cx="711.6" cy="100.6" r="1.7" fill="#5a7aa8"/><circle cx="723.4" cy="100" r="1.7" fill="#5a7aa8"/><circle cx="711.6" cy="100.6" r=".8" fill="#111"/><circle cx="723.4" cy="100" r=".8" fill="#111"/><path d="M706.8 99.4C708.6 97.4 712.6 97.2 714.6 99.2L714.2 100.2C712 98.8 709.4 98.9 707.2 100.4ZM720 98.8C722 96.8 726 96.6 728 98.4L727.6 99.6C725.4 98.2 722.6 98.4 720.6 99.8Z" fill="#3a2414"/><path d="M706.8 102C708.6 103.4 712 103.4 714 102M720.6 101.6C722.4 103 726 102.8 727.8 101.2" stroke="#9a6a3a" stroke-width=".4" fill="none"/><path d="M712 108.4C715 110.4 720.4 110.2 724.4 107.2" stroke="#5a2a1a" stroke-width=".8" fill="none" stroke-linecap="round"/><path d="M716.2 104.8c.8.8 1.8.8 2.6 0" stroke="#b87038" stroke-width=".6" fill="none"/><path d="M704 91.6C703 85 705.6 80 710 77.6L709.6 80.6C712.6 76.6 717.6 74.4 722.6 74.6L720.8 76.8C725.4 76 729.4 77.2 731.8 80L729.4 80.2C732.8 82.8 734.8 87 734.2 91Z" fill="#f4ae14" stroke="#b87410" stroke-width=".4"/><path d="M707.6 90C708 85 710.4 81 713.6 79.2C712.2 83 712.4 87 713.4 90ZM716.6 89.6C716.6 84 719 79.4 722.8 77.2C720.8 82 721.2 86 722.4 89.6ZM725.6 89.4C726 85.6 727.2 82.6 729.4 81C729 84 729.6 87 730.8 89.2Z" fill="#ffdc4a"/><path d="M702.6 90.6C712 91.8 726 91.2 735.4 89L735.8 95.4C726 97.8 712 98.2 702.9 96.8Z" fill="#3b3b40"/><path d="M702.8 91.8C712 93 726 92.4 735.4 90.2" stroke="#5e5e66" stroke-width=".6" fill="none"/><path d="M735.4 90.4C738 88.6 741 88.6 743.6 90.4L741 91.4C742.4 93 743 96 742.4 99.4C740.6 97 738.4 95.4 735.8 94.6Z" fill="#2e2e33"/></g>
<defs><linearGradient id="pmg" x1="0" y1="0" x2="1" y2="0"><stop offset="0" stop-color="#2f9be4"/><stop offset=".5" stop-color="#1f6fd0"/><stop offset="1" stop-color="#3aa8e6"/></linearGradient></defs>
<g font-family="Liberation Sans, sans-serif" font-style="italic" fill="url(#pmg)" stroke="url(#pmg)" stroke-width=".7" stroke-linejoin="round"><text x="663.2" y="166.4" font-size="23.5" textLength="14" lengthAdjust="spacingAndGlyphs">P</text><text transform="translate(678.2 170) rotate(6)" font-size="17" textLength="33.6" lengthAdjust="spacingAndGlyphs">islik</text><text transform="translate(714.2 173.2) rotate(-3)" font-size="20.5" textLength="13.4" lengthAdjust="spacingAndGlyphs">M</text><text transform="translate(728.6 172) rotate(-9)" font-size="17.5" textLength="43.6" lengthAdjust="spacingAndGlyphs">imar</text></g>
<circle cx="763.4" cy="176.4" r=".5" fill="#555"/>
</svg>
<div id="tx">
<div class="t" style="left:36.0px;top:6.0px;font-size:28.0px;color:#ffffff;font-weight:bold;-webkit-text-stroke:.2px currentColor;">A</div>
<div class="t" style="left:550.0px;top:13.2px;font-size:19.6px;letter-spacing:-1.50px;color:#cdd3dc;">Share</div>
<div class="t" style="left:1143.2px;top:13.2px;font-size:19.6px;letter-spacing:-0.33px;color:#e9ecf0;">Autodesk AutoCAD 2024</div>
<div class="t" style="left:1372.8px;top:13.2px;font-size:19.6px;color:#e9ecf0;">Drawing2.dwg</div>
<div class="t" style="left:2064.0px;top:13.7px;font-size:18.0px;letter-spacing:-0.62px;color:#aeb5c0;font-style:italic;">Type a keyword or phrase</div>
<div class="t" style="left:2428.0px;top:13.2px;font-size:19.6px;letter-spacing:0.33px;color:#e3e6ec;">mimarlucky</div>
<div class="t" style="left:2713.2px;top:12.2px;font-size:20.0px;color:#333a46;font-weight:bold;-webkit-text-stroke:.2px currentColor;">?</div>
<div class="t" style="left:20.0px;top:57.0px;font-size:20.0px;letter-spacing:0.26px;color:#f2f4f7;">Home</div>
<div class="t" style="left:108.0px;top:57.2px;font-size:19.6px;letter-spacing:-0.50px;color:#c9ced7;">Insert</div>
<div class="t" style="left:186.0px;top:57.2px;font-size:19.6px;letter-spacing:0.19px;color:#c9ced7;">Annotate</div>
<div class="t" style="left:298.0px;top:57.2px;font-size:19.6px;letter-spacing:-0.28px;color:#c9ced7;">Parametric</div>
<div class="t" style="left:424.0px;top:57.2px;font-size:19.6px;letter-spacing:-0.53px;color:#c9ced7;">View</div>
<div class="t" style="left:496.8px;top:57.2px;font-size:19.6px;letter-spacing:-0.14px;color:#c9ced7;">Manage</div>
<div class="t" style="left:600.0px;top:57.2px;font-size:19.6px;letter-spacing:0.19px;color:#c9ced7;">Output</div>
<div class="t" style="left:694.8px;top:57.2px;font-size:19.6px;color:#c9ced7;">Add-ins</div>
<div class="t" style="left:796.8px;top:57.2px;font-size:19.6px;letter-spacing:-0.35px;color:#c9ced7;">Collaborate</div>
<div class="t" style="left:926.8px;top:57.2px;font-size:19.6px;letter-spacing:-0.74px;color:#c9ced7;">Express Tools</div>
<div class="t" style="left:1072.0px;top:57.2px;font-size:19.6px;letter-spacing:-0.48px;color:#c9ced7;">Featured Apps</div>
<div class="t" style="left:1228.0px;top:57.2px;font-size:19.6px;letter-spacing:-0.27px;color:#f2f6fa;">Layout</div>
<div class="t" style="left:94.4px;top:259.2px;font-size:19.6px;letter-spacing:-0.76px;color:#d5d9e0;">Start</div>
<div class="t" style="left:172.0px;top:259.2px;font-size:19.6px;letter-spacing:-0.03px;color:#d5d9e0;">Spot Işık (PislikMimar.com)*</div>
<div class="t" style="left:473.2px;top:259.2px;font-size:19.6px;letter-spacing:-0.12px;color:#ffffff;font-weight:bold;-webkit-text-stroke:.2px currentColor;">Drawing2*</div>
<div class="t" style="left:20.0px;top:156.6px;font-size:20.0px;letter-spacing:-0.85px;">Line</div>
<div class="t" style="left:72.0px;top:156.6px;font-size:20.0px;letter-spacing:-0.26px;">Polyline</div>
<div class="t" style="left:164.0px;top:156.6px;font-size:20.0px;letter-spacing:-0.52px;">Circle</div>
<div class="t" style="left:248.0px;top:156.6px;font-size:20.0px;letter-spacing:-0.40px;">Arc</div>
<div class="t" style="left:152.0px;top:217.8px;font-size:20.0px;letter-spacing:1.33px;">Draw</div>
<div class="t" style="left:412.8px;top:102.2px;font-size:20.0px;letter-spacing:0.07px;">Move</div>
<div class="t" style="left:412.8px;top:140.2px;font-size:20.0px;letter-spacing:-0.47px;">Copy</div>
<div class="t" style="left:412.8px;top:179.8px;font-size:20.0px;letter-spacing:-0.59px;">Stretch</div>
<div class="t" style="left:529.6px;top:102.2px;font-size:20.0px;letter-spacing:-0.89px;">Rotate</div>
<div class="t" style="left:529.6px;top:140.2px;font-size:20.0px;letter-spacing:0.23px;">Mirror</div>
<div class="t" style="left:532.0px;top:179.8px;font-size:20.0px;letter-spacing:-2.01px;">Scale</div>
<div class="t" style="left:642.4px;top:102.2px;font-size:20.0px;letter-spacing:-0.61px;">Trim</div>
<div class="t" style="left:642.4px;top:140.2px;font-size:20.0px;letter-spacing:0.30px;">Fillet</div>
<div class="t" style="left:642.4px;top:179.8px;font-size:20.0px;letter-spacing:-0.60px;">Array</div>
<div class="t" style="left:528.0px;top:217.8px;font-size:20.0px;letter-spacing:0.18px;">Modify</div>
<div class="t" style="left:789.6px;top:89.8px;font-size:66.0px;color:#eef0f4;">A</div>
<div class="t" style="left:796.0px;top:156.6px;font-size:20.0px;letter-spacing:-0.57px;">Text</div>
<div class="t" style="left:851.2px;top:156.6px;font-size:20.0px;letter-spacing:-0.28px;">Dimension</div>
<div class="t" style="left:991.2px;top:102.2px;font-size:20.0px;letter-spacing:-1.00px;">Linear</div>
<div class="t" style="left:991.2px;top:140.2px;font-size:20.0px;letter-spacing:-0.65px;">Leader</div>
<div class="t" style="left:992.0px;top:179.8px;font-size:20.0px;letter-spacing:-1.08px;">Table</div>
<div class="t" style="left:867.2px;top:217.8px;font-size:20.0px;letter-spacing:0.04px;">Annotation</div>
<div class="t" style="left:1110.8px;top:157.4px;font-size:20.0px;letter-spacing:-1.21px;">Layer</div>
<div class="t" style="left:1090.0px;top:181.0px;font-size:20.0px;letter-spacing:-0.52px;">Properties</div>
<div class="t" style="left:1345.6px;top:100.6px;font-size:20.8px;letter-spacing:-0.37px;">0</div>
<div class="t" style="left:1378.8px;top:140.2px;font-size:20.0px;letter-spacing:-0.50px;">Make Current</div>
<div class="t" style="left:1378.8px;top:179.8px;font-size:20.0px;letter-spacing:-0.55px;">Match Layer</div>
<div class="t" style="left:1262.8px;top:217.8px;font-size:20.0px;letter-spacing:-0.81px;">Layers</div>
<div class="t" style="left:1536.8px;top:155.8px;font-size:20.0px;letter-spacing:-0.80px;">Insert</div>
<div class="t" style="left:1632.0px;top:102.2px;font-size:20.0px;letter-spacing:-0.87px;">Create</div>
<div class="t" style="left:1632.0px;top:140.2px;font-size:20.0px;letter-spacing:-0.62px;">Edit</div>
<div class="t" style="left:1632.0px;top:179.8px;font-size:20.0px;letter-spacing:-0.17px;">Edit Attributes</div>
<div class="t" style="left:1619.2px;top:217.8px;font-size:20.0px;letter-spacing:-0.42px;">Block</div>
<div class="t" style="left:1811.2px;top:156.6px;font-size:20.0px;letter-spacing:-0.17px;">Match</div>
<div class="t" style="left:1794.0px;top:181.0px;font-size:20.0px;letter-spacing:-0.64px;">Properties</div>
<div class="t" style="left:1963.6px;top:100.6px;font-size:20.0px;letter-spacing:-1.05px;">ByLayer</div>
<div class="t" style="left:2038.4px;top:139.8px;font-size:20.0px;letter-spacing:-1.05px;">ByLayer</div>
<div class="t" style="left:2038.4px;top:179.4px;font-size:20.0px;letter-spacing:-1.05px;">ByLayer</div>
<div class="t" style="left:1936.4px;top:217.8px;font-size:20.0px;letter-spacing:-0.36px;">Properties</div>
<div class="t" style="left:2226.0px;top:157.4px;font-size:20.0px;letter-spacing:-1.36px;">Group</div>
<div class="t" style="left:2228.8px;top:217.8px;font-size:20.0px;letter-spacing:-0.60px;">Groups</div>
<div class="t" style="left:2350.4px;top:156.6px;font-size:20.0px;letter-spacing:-0.89px;">Measure</div>
<div class="t" style="left:2363.6px;top:217.8px;font-size:20.0px;">Utilities</div>
<div class="t" style="left:2508.4px;top:156.6px;font-size:20.0px;letter-spacing:-1.51px;">Paste</div>
<div class="t" style="left:2516.8px;top:217.8px;font-size:20.0px;letter-spacing:-0.22px;">Clipboard</div>
<div class="t" style="left:2664.8px;top:156.6px;font-size:20.0px;letter-spacing:-1.80px;">Base</div>
<div class="t" style="left:2642.0px;top:217.8px;font-size:20.0px;letter-spacing:0.55px;">View</div>
<div class="t" style="left:95.2px;top:1653.6px;font-size:19.6px;letter-spacing:-0.12px;color:#d5d9e0;">Model</div>
<div class="t" style="left:188.0px;top:1653.6px;font-size:19.6px;letter-spacing:-0.68px;color:#ffffff;font-weight:bold;-webkit-text-stroke:.2px currentColor;">Layout1</div>
<div class="t" style="left:144.0px;top:1712.1px;font-size:22.4px;letter-spacing:0.11px;color:#3a3a3a;">Ara</div>
<div class="t" style="left:2958.8px;top:1699.6px;font-size:18.8px;letter-spacing:-0.13px;color:#f2f2f2;">22:09</div>
<div class="t" style="left:2937.6px;top:1728.4px;font-size:18.8px;letter-spacing:-0.81px;color:#f2f2f2;">20.04.2026</div>
<div class="t" style="left:3076.8px;top:1726.4px;font-size:14.4px;color:#f2f2f2;">1</div>
<div class="t" style="left:200.0px;top:1365.0px;font-size:45.6px;letter-spacing:-0.76px;color:#141414;font-weight:bold;-webkit-text-stroke:.2px currentColor;-webkit-text-stroke:0;">.dwg</div>
</div>
</body></html>
